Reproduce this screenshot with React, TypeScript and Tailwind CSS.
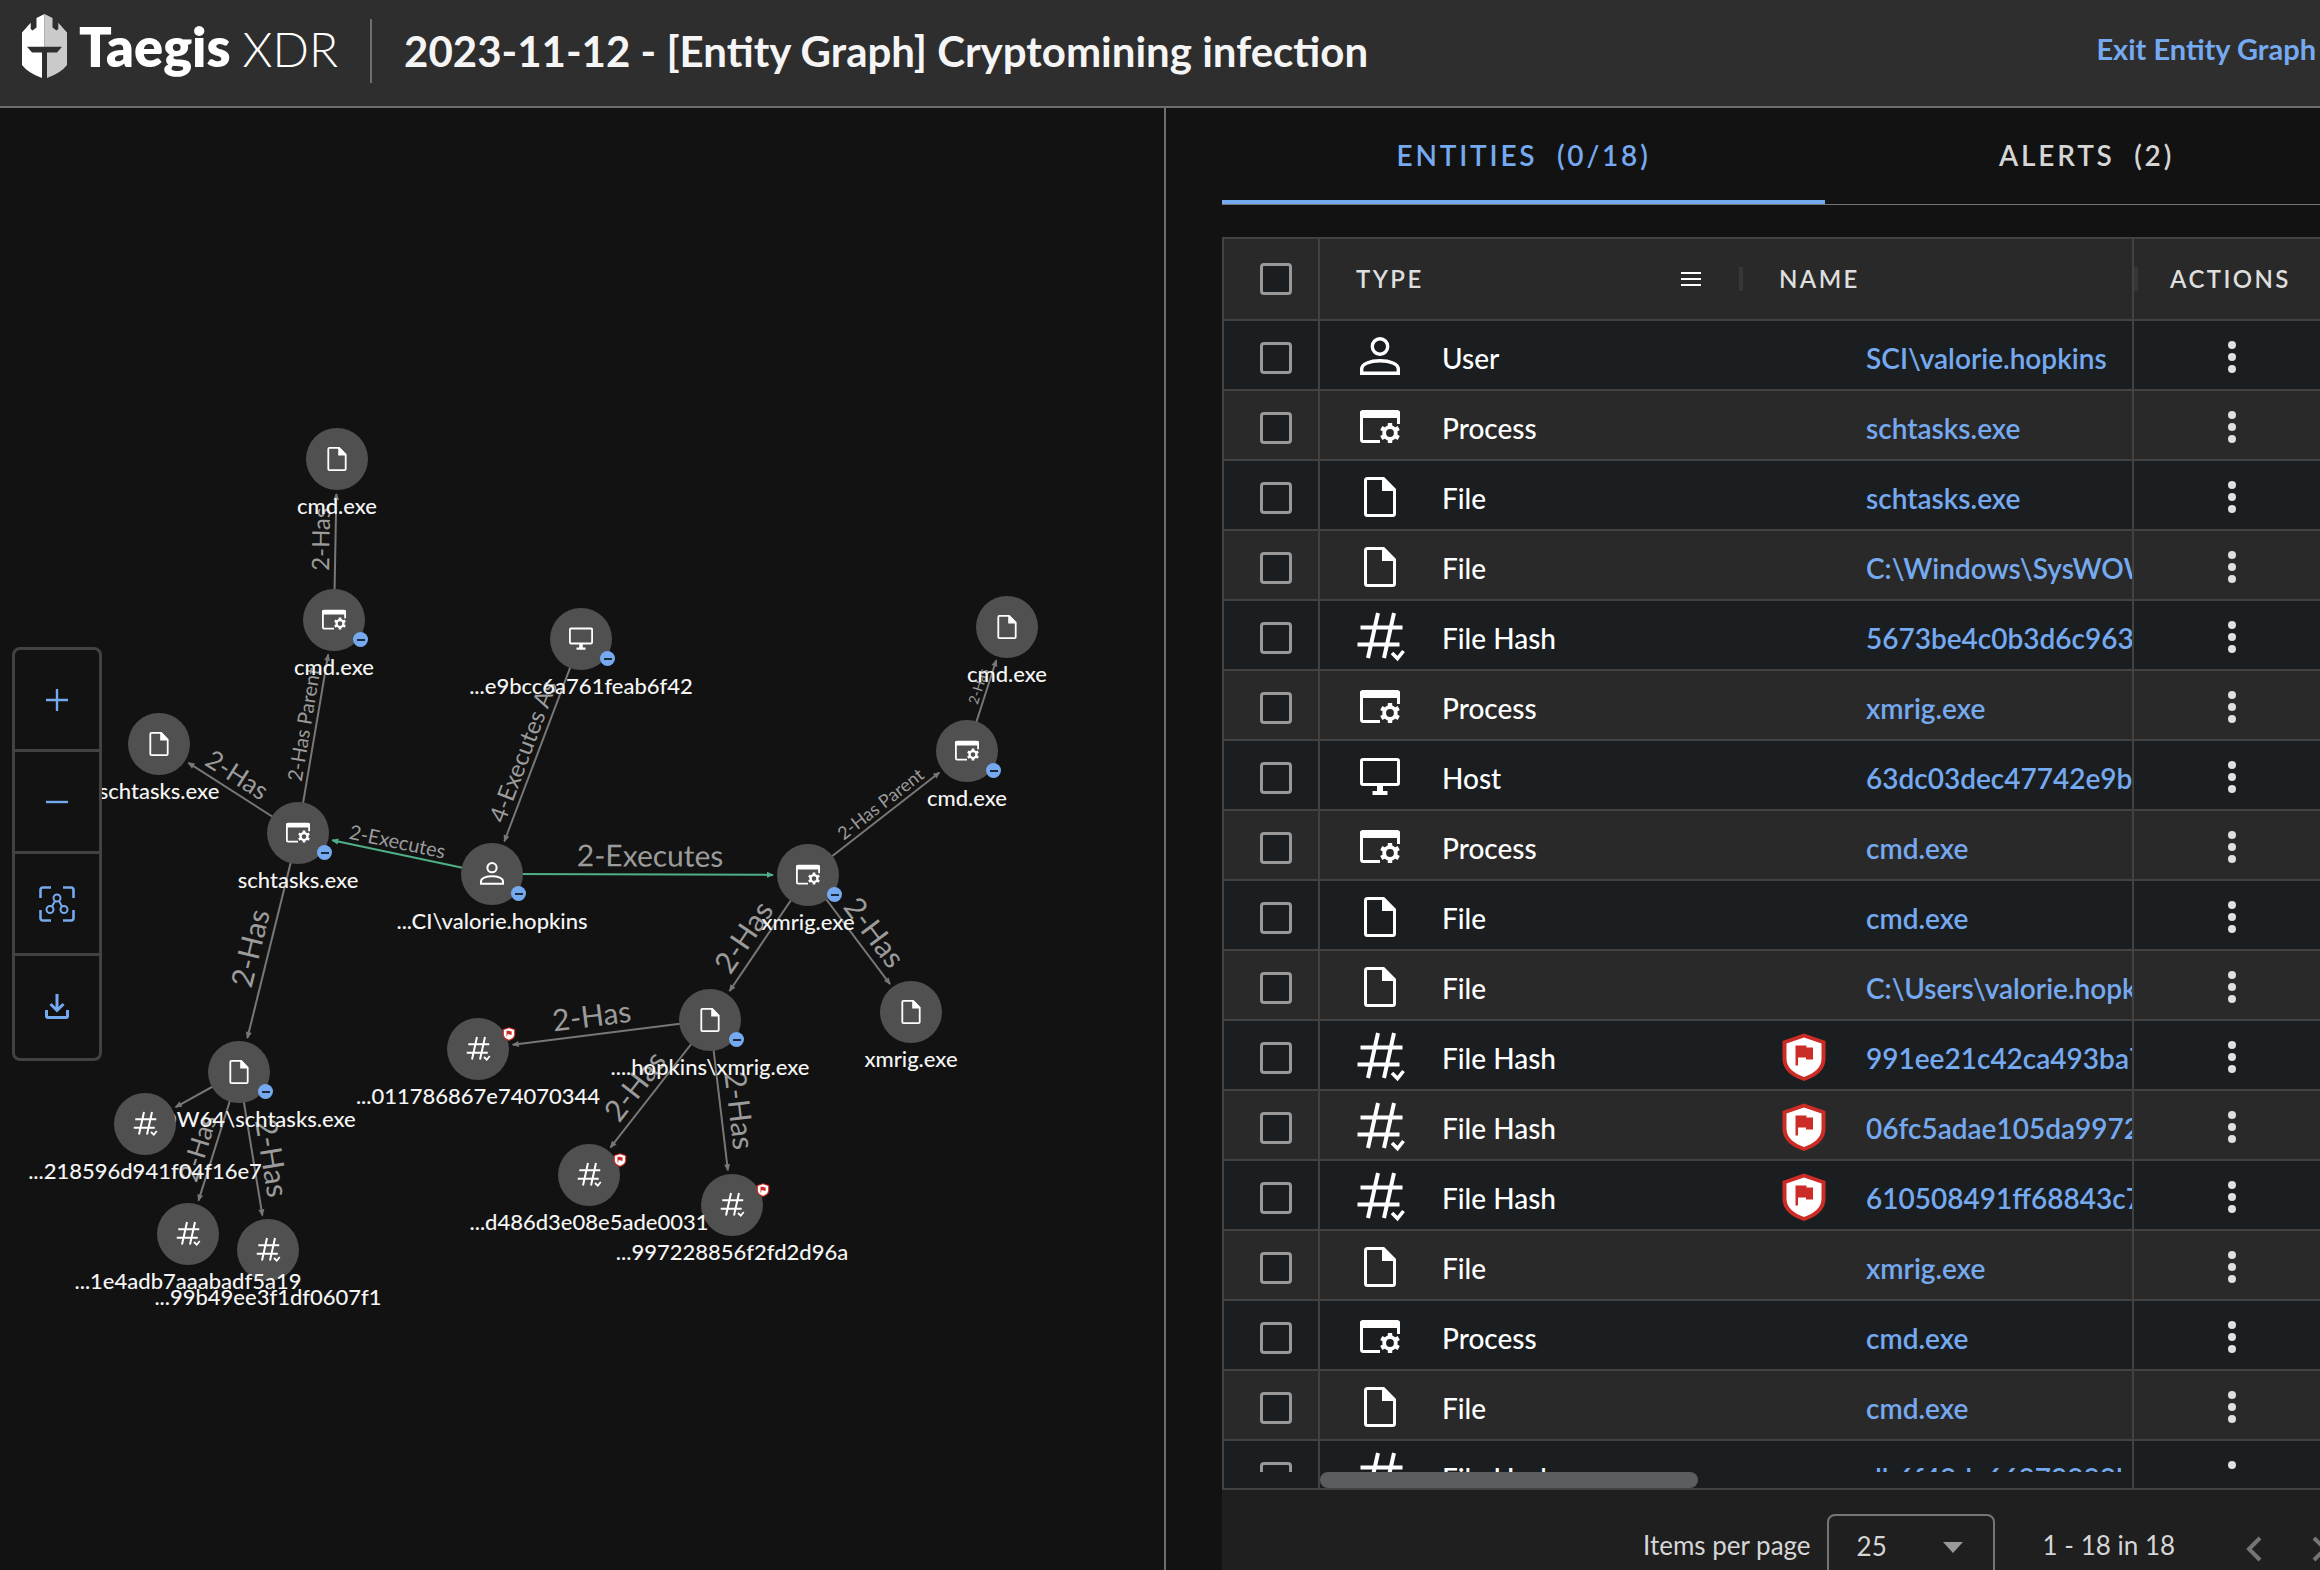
import { useState } from "react";

type EntityType = "user" | "process" | "file" | "hash" | "host";

interface GraphNode {
    id: string;
    type: EntityType;
    label: string;
    x: number;
    y: number;
    expandable?: boolean;
    malicious?: boolean;
}

interface GraphEdge {
    from: string;
    to: string;
    label?: string;
    size?: number;
    active?: boolean;
}

interface Entity {
    type: EntityType;
    name: string;
    malicious?: boolean;
}

const NODE_RADIUS = 31;

const typeNames: Record<EntityType, string> = {
    user: "User",
    process: "Process",
    file: "File",
    hash: "File Hash",
    host: "Host",
};

// later nodes are painted over the earlier ones
const nodes: GraphNode[] = [
    { id: "cmdFile", type: "file", label: "cmd.exe", x: 337, y: 351 },
    { id: "cmd", type: "process", label: "cmd.exe", x: 334, y: 512, expandable: true },
    { id: "schFile", type: "file", label: "schtasks.exe", x: 159, y: 636 },
    { id: "sch", type: "process", label: "schtasks.exe", x: 298, y: 725, expandable: true },
    { id: "host", type: "host", label: "...e9bcc6a761feab6f42", x: 581, y: 531, expandable: true },
    { id: "user", type: "user", label: "...CI\\valorie.hopkins", x: 492, y: 766, expandable: true },
    { id: "xmrig", type: "process", label: "xmrig.exe", x: 808, y: 767, expandable: true },
    { id: "cmd2", type: "process", label: "cmd.exe", x: 967, y: 643, expandable: true },
    { id: "cmd2File", type: "file", label: "cmd.exe", x: 1007, y: 519 },
    { id: "xmrigFile", type: "file", label: "xmrig.exe", x: 911, y: 904 },
    { id: "xmrigPath", type: "file", label: "....hopkins\\xmrig.exe", x: 710, y: 912, expandable: true },
    { id: "hash0117", type: "hash", label: "...011786867e74070344", x: 478, y: 941, malicious: true },
    { id: "hash9972", type: "hash", label: "...997228856f2fd2d96a", x: 732, y: 1097, malicious: true },
    { id: "hashD486", type: "hash", label: "...d486d3e08e5ade0031", x: 589, y: 1067, malicious: true },
    { id: "schPath", type: "file", label: "...WOW64\\schtasks.exe", x: 239, y: 964, expandable: true },
    { id: "hash2185", type: "hash", label: "...218596d941f04f16e7", x: 145, y: 1016 },
    { id: "hash99b4", type: "hash", label: "...99b49ee3f1df0607f1", x: 268, y: 1142 },
    { id: "hash1e4a", type: "hash", label: "...1e4adb7aaabadf5a19", x: 188, y: 1126 },
];

const edges: GraphEdge[] = [
    { from: "cmd", to: "cmdFile", label: "2-Has", size: 24 },
    { from: "sch", to: "cmd", label: "2-Has Parent", size: 20 },
    { from: "sch", to: "schFile", label: "2-Has", size: 26 },
    { from: "sch", to: "schPath", label: "2-Has", size: 30 },
    { from: "host", to: "user", label: "4-Executes As", size: 24 },
    { from: "user", to: "sch", label: "2-Executes", size: 20, active: true },
    { from: "user", to: "xmrig", label: "2-Executes", size: 30, active: true },
    { from: "xmrig", to: "cmd2", label: "2-Has Parent", size: 18 },
    { from: "cmd2", to: "cmd2File", label: "2-Has", size: 14 },
    { from: "xmrig", to: "xmrigFile", label: "2-Has", size: 30 },
    { from: "xmrig", to: "xmrigPath", label: "2-Has", size: 30 },
    { from: "xmrigPath", to: "hash0117", label: "2-Has", size: 30 },
    { from: "xmrigPath", to: "hashD486", label: "2-Has", size: 30 },
    { from: "xmrigPath", to: "hash9972", label: "2-Has", size: 30 },
    { from: "schPath", to: "hash2185" },
    { from: "schPath", to: "hash1e4a", label: "2-Has", size: 26 },
    { from: "schPath", to: "hash99b4", label: "2-Has", size: 30 },
];

const entities: Entity[] = [
    { type: "user", name: "SCI\\valorie.hopkins" },
    { type: "process", name: "schtasks.exe" },
    { type: "file", name: "schtasks.exe" },
    { type: "file", name: "C:\\Windows\\SysWOW64" },
    { type: "hash", name: "5673be4c0b3d6c963" },
    { type: "process", name: "xmrig.exe" },
    { type: "host", name: "63dc03dec47742e9b" },
    { type: "process", name: "cmd.exe" },
    { type: "file", name: "cmd.exe" },
    { type: "file", name: "C:\\Users\\valorie.hopkins" },
    { type: "hash", name: "991ee21c42ca493ba7", malicious: true },
    { type: "hash", name: "06fc5adae105da9972", malicious: true },
    { type: "hash", name: "610508491ff68843c7", malicious: true },
    { type: "file", name: "xmrig.exe" },
    { type: "process", name: "cmd.exe" },
    { type: "file", name: "cmd.exe" },
    { type: "hash", name: "db6f48da66879888b" },
];

function TypeIcon({ type, small }: { type: EntityType; small?: boolean }) {
    const smallBox = type === "hash" ? "w-5 h-5 overflow-visible" : "w-6 h-6 overflow-visible";
    const box = small ? smallBox : "w-10 h-10 overflow-visible";
    return (
        <svg viewBox="0 0 40 40" className={box} fill="none" stroke="#fff" strokeWidth="3" aria-hidden="true">
            {type === "user" && (
                <>
                    <circle cx="20" cy="9.500" r="7.7" strokeWidth="3.4" />
                    <path strokeWidth="3.4" d="M1.7 36.3V32C1.7 27 10 23.7 20 23.7S38.3 27 38.3 32V36.3Z" />
                </>
            )}
            {type === "process" && (
                <>
                    <path d="M20 34.5H3.5Q1.5 34.5 1.5 32.5V6Q1.5 4.500 3.500 4.500H36.500Q38.500 4.500 38.500 6V17" />
                    <path fill="#fff" stroke="none" d="M0 6Q0 3.500 2.500 3.500H37.500Q40 3.500 40 6V11H0Z" />
                    <circle cx="30" cy="26" r="5.8" strokeWidth="3.800" />
                    <path
                        strokeWidth="4.400"
                        d="M30 16V20M30 32V36M21.300 21L24.800 23M35.200 29L38.700 31M21.300 31L24.800 29M35.200 23L38.700 21"
                    />
                </>
            )}
            {type === "file" && (
                <>
                    <path d="M7.500 1.500H23.500L34.500 12.500V36.500Q34.500 38.500 32.500 38.500H7.500Q5.500 38.500 5.500 36.500V3.500Q5.500 1.500 7.500 1.500Z" />
                    <path fill="#fff" stroke="none" d="M22 1H24.500L35 12V14H22Z" />
                </>
            )}
            {type === "hash" && (
                <>
                    <path strokeWidth="4" d="M18 -4L8 41M34 -4L24 41M0.500 10.500H42.500M-2.500 27.500H39.500" />
                    <path strokeWidth="3.600" d="M32 36L37.500 41.500L43.500 34" />
                </>
            )}
            {type === "host" && (
                <>
                    <rect x="1.500" y="2.500" width="37" height="25" rx="1.500" />
                    <path fill="#fff" stroke="none" d="M17 28H23V34H27.500V38H12.500V34H17Z" />
                </>
            )}
        </svg>
    );
}

function ShieldIcon({ className }: { className: string }) {
    return (
        <svg viewBox="0 0 44 48" className={className} role="img" aria-label="Malicious">
            <path d="M22 0.500L43.500 8V26C43.500 37 34 44 22 48C10 44 0.500 37 0.500 26V8Z" fill="#cb2c26" />
            <path d="M22 4.500L39.500 10.500V26C39.500 34.500 32 40.500 22 44C12 40.500 4.500 34.500 4.500 26V10.500Z" fill="#fff" />
            <path d="M13.500 12.500H24.500V14.500H31V26.500H24V24.500H16V32.500H13.500Z" fill="#cb2c26" />
        </svg>
    );
}

function EdgeLine({ edge }: { edge: GraphEdge }) {
    const from = nodes.find((n) => n.id === edge.from)!;
    const to = nodes.find((n) => n.id === edge.to)!;
    const dx = to.x - from.x;
    const dy = to.y - from.y;
    const length = Math.hypot(dx, dy);
    const ux = dx / length;
    const uy = dy / length;
    const endX = to.x - ux * (NODE_RADIUS + 4);
    const endY = to.y - uy * (NODE_RADIUS + 4);
    const angle = (Math.atan2(dy, dx) * 180) / Math.PI;
    // keeps the label readable from left to right
    const textAngle = dx < 0 ? angle + 180 : angle;
    const color = edge.active ? "#4fb088" : "#777777";

    return (
        <g>
            <line x1={from.x} y1={from.y} x2={endX} y2={endY} stroke={color} strokeWidth="2" />
            <path d="M1 0L-6 -3V3Z" fill={color} transform={`translate(${endX} ${endY}) rotate(${angle})`} />
            {edge.label && (
                <text
                    transform={`translate(${(from.x + to.x) / 2} ${(from.y + to.y) / 2}) rotate(${textAngle})`}
                    y={-Math.round((edge.size ?? 24) / 4)}
                    textAnchor="middle"
                    fontSize={edge.size}
                    fill="#9b9b9b"
                >
                    {edge.label}
                </text>
            )}
        </g>
    );
}

function NodeItem({ node }: { node: GraphNode }) {
    return (
        <div className="absolute w-0 h-0" style={{ left: node.x, top: node.y }}>
            <div className="absolute -left-8 -top-8 w-16 h-16 flex items-center justify-center">
                <div className="w-[62px] h-[62px] rounded-full bg-[#505050] flex items-center justify-center">
                    <TypeIcon type={node.type} small />
                </div>
            </div>
            {node.expandable && (
                <button
                    type="button"
                    aria-label="Collapse"
                    className="absolute left-[19px] top-3 w-[15px] h-[15px] rounded-full bg-[#75a9f0] flex items-center justify-center"
                >
                    <span className="w-2 h-[2px] bg-[#1c2a3c]" />
                </button>
            )}
            {node.malicious && <ShieldIcon className="absolute left-6 -top-[22px] w-[14px] h-[14px]" />}
            <div className="absolute top-[33px] left-0 -translate-x-1/2 whitespace-nowrap text-[22px] leading-7 font-medium text-[#f5f5f5]">
                {node.label}
            </div>
        </div>
    );
}

function GraphToolbar() {
    const button = "h-[102px] w-full flex items-center justify-center border-b-3 border-[#424242] last:border-b-0";
    return (
        <div className="absolute left-3 top-[539px] w-[90px] rounded-lg border-3 border-[#424242] bg-[#121212] overflow-hidden">
            <button type="button" aria-label="Zoom in" className={button}>
                <svg viewBox="0 0 24 24" className="w-6 h-6" stroke="#75a9f0" strokeWidth="2.400">
                    <path d="M12 1V23M1 12H23" />
                </svg>
            </button>
            <button type="button" aria-label="Zoom out" className={button}>
                <svg viewBox="0 0 24 24" className="w-6 h-6" stroke="#75a9f0" strokeWidth="2.400">
                    <path d="M1 12H23" />
                </svg>
            </button>
            <button type="button" aria-label="Fit graph" className={button}>
                <svg viewBox="0 0 36 36" className="w-9 h-9" fill="none" stroke="#75a9f0" strokeWidth="2.600">
                    <path d="M1.500 12V4Q1.500 1.500 4 1.500H12M24 1.500H32Q34.500 1.500 34.500 4V12M34.500 24V32Q34.500 34.500 32 34.500H24M12 34.500H4Q1.500 34.500 1.500 32V24" />
                    <circle cx="18" cy="12" r="3.500" strokeWidth="2" />
                    <circle cx="11" cy="23.500" r="3.500" strokeWidth="2" />
                    <circle cx="25" cy="23.500" r="3.500" strokeWidth="2" />
                    <path strokeWidth="2" d="M16 15L13 20.500M20 15L23 20.500" />
                </svg>
            </button>
            <button type="button" aria-label="Download" className={button}>
                <svg viewBox="0 0 24 30" className="w-6 h-[30px]" fill="none" stroke="#75a9f0" strokeWidth="3">
                    <path d="M12 2V18M5.500 12L12 18.500L18.500 12M1.500 18V24Q1.500 25.500 3 25.500H21Q22.500 25.500 22.500 24V18" />
                </svg>
            </button>
        </div>
    );
}

function Header() {
    return (
        <header className="h-[108px] shrink-0 flex items-center bg-[#2e2e2e] border-b-2 border-[#6e6e6e] pl-[22px] pr-1">
            <svg viewBox="0 0 45 64" className="w-[45px] h-16 mb-[14px] shrink-0" aria-hidden="true">
                <path
                    fill="#fff"
                    d="M22.500 0L14.500 4V13.500L10.500 16.500L8.700 15V8.700L0 18.500V51Q6 59 20 64V38.500H10L5 32.700H22.500Z"
                />
                <path
                    fill="#cacaca"
                    d="M22.500 0L30.500 4V13.500L34.500 16.500L36.300 15V8.700L45 18.500V51Q39 59 25 64V38.500H35L40 32.700H22.500Z"
                />
            </svg>
            <div className="flex items-baseline gap-3 ml-3 mb-3 text-white leading-none">
                <span className="text-[54px] font-extrabold">Taegis</span>
                <span className="text-[48px] font-light">XDR</span>
            </div>
            <div className="w-[2px] h-16 ml-8 mb-1 bg-[#6e6e6e]" />
            <h1 className="ml-8 mb-1 text-[42px] leading-none font-bold text-[#f5f5f5] whitespace-nowrap">
                2023-11-12 - [Entity Graph] Cryptomining infection
            </h1>
            <a href="#" className="ml-auto mb-2 text-[29px] leading-8 font-bold text-[#75a9f0] whitespace-nowrap">
                Exit Entity Graph
            </a>
        </header>
    );
}

function CheckBox({ label }: { label: string }) {
    return (
        <input
            type="checkbox"
            aria-label={label}
            className="appearance-none block w-8 h-8 ml-9 rounded border-3 border-[#999999] bg-[#1a1e20] checked:bg-[#75a9f0]"
        />
    );
}

function EntityTable() {
    return (
        <table className="w-full table-fixed border-separate border-spacing-0 text-left">
            <colgroup>
                <col className="w-24" />
                <col className="w-[423px]" />
                <col />
                <col className="w-[198px]" />
            </colgroup>
            <thead>
                <tr className="h-[82px] bg-[#292929] text-2xl tracking-widest text-[#dedede]">
                    <th className="p-0 border-b-2 border-r-2 border-[#424242]">
                        <CheckBox label="Select all" />
                    </th>
                    <th className="p-0 border-b-2 border-[#424242] font-semibold">
                        <div className="flex items-center pl-9">
                            TYPE
                            <button type="button" aria-label="Column menu" className="ml-auto mr-[38px] flex flex-col gap-1">
                                <span className="w-5 h-[2px] bg-white" />
                                <span className="w-5 h-[2px] bg-white" />
                                <span className="w-5 h-[2px] bg-white" />
                            </button>
                            <span className="w-1 h-6 bg-[#363636]" />
                        </div>
                    </th>
                    <th className="p-0 pl-9 border-b-2 border-[#424242] font-semibold">NAME</th>
                    <th className="p-0 border-b-2 border-l-2 border-[#424242] font-semibold">
                        <div className="flex items-center gap-8">
                            <span className="w-1 h-6 bg-[#363636]" />
                            ACTIONS
                        </div>
                    </th>
                </tr>
            </thead>
            <tbody>
                {entities.map((entity, index) => (
                    <tr key={index} className="h-[70px] text-[28px] leading-8 font-medium bg-[#1a1e20] even:bg-[#292929]">
                        <td className="p-0 pt-[6px] border-b-2 border-r-2 border-[#424242]">
                            <CheckBox label={`Select ${entity.name}`} />
                        </td>
                        <td className="p-0 pt-1 border-b-2 border-[#424242] text-white">
                            <div className="flex items-center gap-[42px] pl-10">
                                <TypeIcon type={entity.type} />
                                <span className="pt-[2px]">{typeNames[entity.type]}</span>
                            </div>
                        </td>
                        <td className="p-0 pt-1 border-b-2 border-[#424242] overflow-hidden">
                            <div className="flex items-center pl-[39px] whitespace-nowrap overflow-hidden">
                                <div className="w-[84px] shrink-0">
                                    {entity.malicious && <ShieldIcon className="w-11 h-12" />}
                                </div>
                                <a href="#" className="pt-[2px] font-semibold text-[#75a9f0]">
                                    {entity.name}
                                </a>
                            </div>
                        </td>
                        <td className="p-0 pt-1 border-b-2 border-l-2 border-[#424242]">
                            <button type="button" aria-label="Actions" className="mx-auto flex flex-col items-center gap-1">
                                <span className="w-2 h-2 rounded-full bg-[#e0e0e0]" />
                                <span className="w-2 h-2 rounded-full bg-[#e0e0e0]" />
                                <span className="w-2 h-2 rounded-full bg-[#e0e0e0]" />
                            </button>
                        </td>
                    </tr>
                ))}
            </tbody>
        </table>
    );
}

function Pagination() {
    return (
        <div className="h-20 shrink-0 overflow-hidden flex items-start bg-[#1f1f1f] pl-[421px] pt-6 text-[26px] text-[#d6d6d6] whitespace-nowrap">
            <label htmlFor="pageSize" className="leading-[62px]">
                Items per page
            </label>
            <div className="relative ml-4">
                <select
                    id="pageSize"
                    defaultValue="25"
                    className="appearance-none w-[168px] h-16 pl-7 rounded-lg border-2 border-[#757575] bg-transparent"
                >
                    <option value="25">25</option>
                </select>
                <svg viewBox="0 0 20 11" className="absolute right-8 top-7 w-5 h-[11px] pointer-events-none">
                    <path d="M0 0H20L10 11Z" fill="#999999" />
                </svg>
            </div>
            <span className="ml-12 leading-[62px]">1 - 18 in 18</span>
            <button type="button" aria-label="Previous page" className="ml-[71px] mt-[22px]">
                <svg viewBox="0 0 16 26" className="w-4 h-[26px]" fill="none" stroke="#757575" strokeWidth="4">
                    <path d="M14 2L3 13L14 24" />
                </svg>
            </button>
            <button type="button" aria-label="Next page" className="ml-[50px] mt-[22px]">
                <svg viewBox="0 0 16 26" className="w-4 h-[26px]" fill="none" stroke="#757575" strokeWidth="4">
                    <path d="M2 2L13 13L2 24" />
                </svg>
            </button>
        </div>
    );
}

export default function App() {
    const [tab, setTab] = useState("entities");

    const tabClass = (active: boolean) =>
        `h-[96px] pt-[2px] text-[28px] tracking-widest font-semibold border-b-4 ${
            active ? "border-[#75a9f0] text-[#75a9f0]" : "border-transparent text-[#d6d6d6]"
        }`;

    return (
        <div className="h-screen flex flex-col overflow-hidden bg-[#121212] font-['Lato',sans-serif]">
            <Header />
            <main className="flex-1 min-h-0 grid grid-cols-[1166fr_1154fr]">
                <section className="relative min-w-0 overflow-hidden border-r-2 border-[#6e6e6e]">
                    <svg className="absolute inset-0 w-full h-full">
                        {edges.map((edge) => (
                            <EdgeLine key={edge.from + edge.to} edge={edge} />
                        ))}
                    </svg>
                    {nodes.map((node) => (
                        <NodeItem key={node.id} node={node} />
                    ))}
                    <GraphToolbar />
                </section>
                <section className="min-w-0 min-h-0 flex flex-col ml-14 -mr-7">
                    <div className="grid grid-cols-[603fr_523fr] border-b border-[#757575]">
                        <button type="button" className={tabClass(tab === "entities")} onClick={() => setTab("entities")}>
                            ENTITIES&nbsp; (0/18)
                        </button>
                        <button type="button" className={tabClass(tab === "alerts")} onClick={() => setTab("alerts")}>
                            ALERTS&nbsp; (2)
                        </button>
                    </div>
                    <div className="flex-1 min-h-0 flex flex-col mt-8 mr-4 border-2 border-[#424242]">
                        <div className="flex-1 min-h-0 overflow-hidden">
                            <EntityTable />
                        </div>
                        <div className="h-4 shrink-0 flex bg-[#1a1e20]">
                            <div className="w-24 border-r-2 border-[#424242]" />
                            <div className="flex-1">
                                <div className="w-[378px] h-4 rounded-full bg-[#5c5d5e]" />
                            </div>
                            <div className="w-[198px] border-l-2 border-[#424242]" />
                        </div>
                    </div>
                    <Pagination />
                </section>
            </main>
        </div>
    );
}
